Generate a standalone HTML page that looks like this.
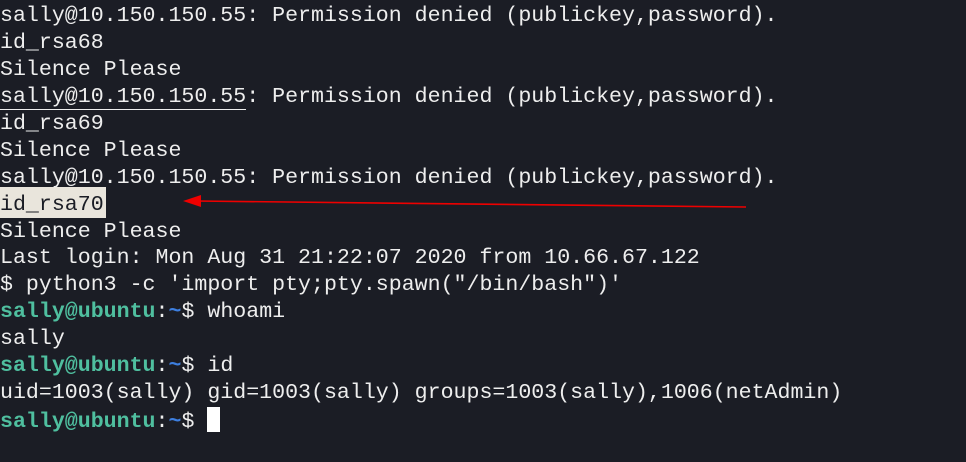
<!DOCTYPE html>
<html><head><meta charset="utf-8"><style>
html,body{margin:0;padding:0;background:#1b1d25;width:966px;height:462px;overflow:hidden}
pre{margin:0;position:absolute;left:0;top:3px;font-family:"Liberation Mono","DejaVu Sans Mono",monospace;font-size:21.6px;line-height:26.93px;color:#eeeeee;letter-spacing:0}
.g{color:#4fbf9f;font-weight:bold}.b{color:#3d7fe0;font-weight:bold}
.hl{position:absolute;left:0;top:187px;width:106px;height:31px;background:#e9e5dc}
.u{border-bottom:1.5px solid #eee}
.cur{display:inline-block;width:13px;height:25px;background:#fff;vertical-align:-5px}
</style></head><body>
<div class="hl"></div>
<pre>sally@10.150.150.55: Permission denied (publickey,password).
id_rsa68
Silence Please
<span class="u">sally@10.150.150.55</span>: Permission denied (publickey,password).
id_rsa69
Silence Please
sally@10.150.150.55: Permission denied (publickey,password).
<span style="color:#1b1d25">id_rsa70</span>
Silence Please
Last login: Mon Aug 31 21:22:07 2020 from 10.66.67.122
$ python3 -c 'import pty;pty.spawn("/bin/bash")'
<span class="g">sally@ubuntu</span>:<span class="b">~</span>$ whoami
sally
<span class="g">sally@ubuntu</span>:<span class="b">~</span>$ id
uid=1003(sally) gid=1003(sally) groups=1003(sally),1006(netAdmin)
<span class="g">sally@ubuntu</span>:<span class="b">~</span>$ <span class="cur"></span></pre>
<svg width="966" height="462" style="position:absolute;left:0;top:0">
<line x1="746" y1="207" x2="196" y2="201" stroke="#e00" stroke-width="1.6"/>
<polygon points="183,201 201,195 201,207" fill="#e00"/>
</svg>
</body></html>
